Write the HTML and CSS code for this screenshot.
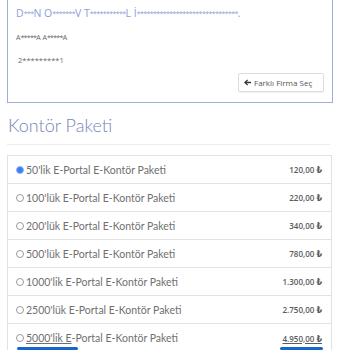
FILE: index.html
```html
<!DOCTYPE html>
<html lang="tr">
<head>
<meta charset="utf-8">
<link rel="stylesheet" href="styles.css">
</head>
<body>
<div class="page">
  <div class="firm-card">
    <div class="firm-name">D<span class="st">***</span>N O<span class="st">*******</span>V T<span class="st">***********</span>L İ<span class="st">*******************************</span>.</div>
    <div class="firm-owner">A<span class="st2">*****</span>A A<span class="st2">*****</span>A</div>
    <div class="firm-tax">2*********1</div>
    <div class="actions">
      <button class="btn"><svg class="btn-icon" viewBox="0 0 10 10" width="7" height="7"><path d="M0 5 L4.6 0.6 L5.9 1.9 L3.6 4.1 H10 V5.9 H3.6 L5.9 8.1 L4.6 9.4 Z" fill="#333"/></svg>Farklı Firma Seç</button>
    </div>
  </div>
  <h2 class="section-title">Kontör Paketi</h2>
  <div class="divider"></div>
  <div class="packages">
    <div class="pkg"><span class="radio checked"></span><span class="pkg-name">50'lik E-Portal E-Kontör Paketi</span><span class="price">120,00 ₺</span></div>
    <div class="pkg"><span class="radio"></span><span class="pkg-name">100'lük E-Portal E-Kontör Paketi</span><span class="price">220,00 ₺</span></div>
    <div class="pkg"><span class="radio"></span><span class="pkg-name">200'lük E-Portal E-Kontör Paketi</span><span class="price">340,00 ₺</span></div>
    <div class="pkg"><span class="radio"></span><span class="pkg-name">500'lük E-Portal E-Kontör Paketi</span><span class="price">780,00 ₺</span></div>
    <div class="pkg"><span class="radio"></span><span class="pkg-name">1000'lik E-Portal E-Kontör Paketi</span><span class="price">1.300,00 ₺</span></div>
    <div class="pkg"><span class="radio"></span><span class="pkg-name">2500'lük E-Portal E-Kontör Paketi</span><span class="price">2.750,00 ₺</span></div>
    <div class="pkg pkg-focus"><span class="radio"></span><span class="pkg-name"><span class="ul">5000'lik E</span>-Portal E-Kontör Paketi</span><span class="price"><span class="ul ul-price">4.950,00 ₺</span></span></div>
  </div>
</div>
</body>
</html>
```
FILE: styles.css
```css
html, body {
  margin: 0;
  padding: 0;
  background: #fff;
}
.page {
  width: 326px;
  padding-left: 7px;
  font-family: "Open Sans", "DejaVu Sans", sans-serif;
}
.firm-card {
  border: 1px solid #9eaddb;
  border-top: none;
  padding: 6px 8px 10px 8px;
}
.firm-name {
  font-size: 10.5px;
  line-height: 14px;
  height: 14px;
  color: #8aa0da;
  font-weight: 400;
  white-space: nowrap;
  overflow: hidden;
}
.st {
  font-size: 7px;
  letter-spacing: -0.6px;
  vertical-align: 1px;
}
.firm-owner {
  margin-top: 13px;
  font-size: 7px;
  line-height: 10px;
  color: #666;
}
.st2 {
  font-size: 7px;
  letter-spacing: -0.7px;
}
.firm-tax {
  margin-top: 12px;
  font-size: 7.5px;
  line-height: 10px;
  color: #666;
  padding-left: 2px;
}
.actions {
  margin-top: 8px;
  display: flex;
  justify-content: flex-end;
}
.btn {
  height: 19px;
  box-sizing: border-box;
  width: 86px;
  border: 1px solid #ddd;
  border-radius: 2px;
  background: #fff;
  box-shadow: 0 1px 1px rgba(0,0,0,0.06);
  font-family: "Open Sans", sans-serif;
  font-size: 8px;
  color: #555;
  padding: 0 5px;
  display: flex;
  align-items: center;
  gap: 3px;
}
.btn-icon {
  flex: none;
}
.section-title {
  margin: 12px 0 0 1px;
  font-family: Lato, sans-serif;
  font-weight: 300;
  font-size: 18px;
  line-height: 20px;
  color: #7884b5;
}
.divider {
  margin-top: 9px;
  height: 1px;
  width: 323px;
  background: #ececec;
}
.packages {
  margin-top: 10px;
  border: 1px solid #e2e2e2;
  width: 325px;
  box-sizing: border-box;
}
.pkg {
  position: relative;
  height: 28px;
  box-sizing: border-box;
  border-bottom: 1px solid #e2e2e2;
  display: flex;
  align-items: center;
  padding: 0 9px 0 8px;
  font-family: Lato, sans-serif;
  font-size: 10.5px;
  color: #707070;
}
.pkg:last-child {
  border-bottom: none;
}
.radio {
  width: 6px;
  height: 6px;
  border: 1px solid #9a9a9a;
  border-radius: 50%;
  margin-right: 2px;
  flex: none;
  box-sizing: content-box;
}
.radio.checked {
  background: #3a7ff2;
  border-color: #8fb5f3;
}
.pkg-name {
  flex: 1;
}
.price {
  font-family: "Open Sans", "DejaVu Sans", sans-serif;
  font-weight: 600;
  font-size: 8px;
  color: #5a5a5a;
}
.ul {
  text-decoration: underline;
  text-decoration-thickness: 0.5px;
}
.pkg-focus::before,
.pkg-focus::after {
  content: "";
  position: absolute;
  bottom: 2px;
  height: 3px;
  border-radius: 2px;
  background: #1766c9;
}
.pkg-focus::before {
  left: 9px;
  width: 61px;
}
.pkg-focus::after {
  right: 8px;
  width: 43px;
}
```
